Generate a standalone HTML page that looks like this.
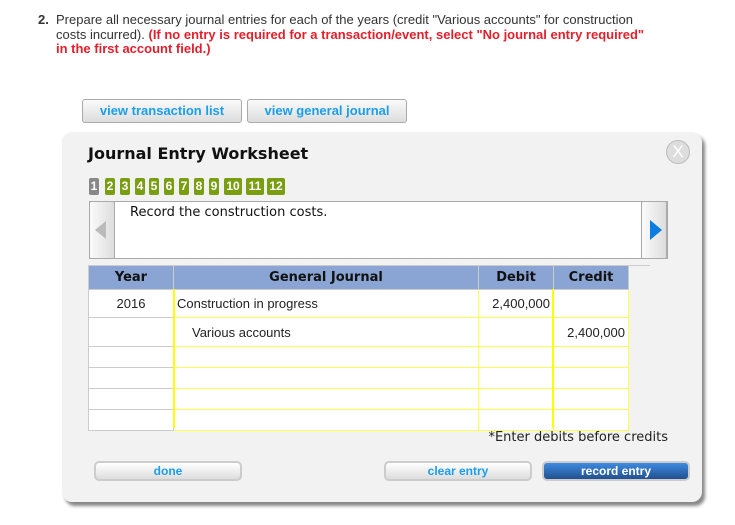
<!DOCTYPE html>
<html><head><meta charset="utf-8"><style>
body{margin:0;width:735px;height:525px;background:#fff;position:relative;overflow:hidden;font-family:"Liberation Sans",Arial,sans-serif}
.a{position:absolute}
.q{left:38px;top:13px;font-size:13px;color:#333;line-height:14.5px;width:610px}
.q b.n{position:absolute;left:0}
.red{color:#e2202c;font-weight:bold}
.tb{top:99px;height:22px;border:1px solid #aaa;border-radius:3px;background:linear-gradient(#fafafa,#ddd);color:#1a9fe8;font-weight:bold;font-size:13px;text-align:center;line-height:22px}
.panel{left:62px;top:132px;width:640px;height:370px;background:#f2f2f2;border-radius:10px;box-shadow:3px 4px 3px #888}
.title{left:88px;top:144px;font:bold 16px "DejaVu Sans",Verdana,sans-serif;color:#111}
.tab{top:178px;height:17px;width:10px;background:#7a9e12;border-radius:2px;color:#fff;font:bold 12px "Liberation Sans",sans-serif;text-align:center;line-height:17px}
.box{left:89px;top:201px;width:577px;height:56px;background:#fff;border:1px solid #aaa}
.nb{top:201px;width:24px;height:56px;border:1px solid #aaa;border-radius:2px;background:linear-gradient(90deg,#fbfbfb,#ddd)}
table{position:absolute;left:88px;top:265px;border-collapse:collapse;font-size:13px;color:#222}
td,th{padding:0;height:20px}
th{background:#8aa5d3;height:23px;font:bold 13px "DejaVu Sans",Verdana,sans-serif;border:1px solid #ccc;color:#111}
td{border:1px solid #ccc;background:#fff}
td.y{border:1px solid #ffff50}
.btn{top:461px;width:144px;height:16px;border:2px solid #ccc;border-radius:5px;background:linear-gradient(#fff,#ddd);color:#1a9fe8;font-weight:bold;font-size:12px;text-align:center;line-height:16px}
</style></head><body>
<div class="a q"><b class="n">2.</b><div style="margin-left:18px">Prepare all necessary journal entries for each of the years (credit "Various accounts" for construction costs incurred). <span class="red">(If no entry is required for a transaction/event, select "No journal entry required" in the first account field.)</span></div></div>
<div class="a tb" style="left:82px;width:158px">view transaction list</div>
<div class="a tb" style="left:247px;width:158px">view general journal</div>
<div class="a panel"></div>
<div class="a title">Journal Entry Worksheet</div>
<div class="a" style="left:666px;top:140px;width:22px;height:22px;border-radius:50%;background:#ddd;border:1px solid #bbb;color:#fff;font-size:17px;text-align:center;line-height:22px">X</div>
<div class="a tab" style="left:89px;background:#888">1</div>
<div class="a tab" style="left:105px">2</div>
<div class="a tab" style="left:120px">3</div>
<div class="a tab" style="left:135px">4</div>
<div class="a tab" style="left:149px">5</div>
<div class="a tab" style="left:164px">6</div>
<div class="a tab" style="left:179px">7</div>
<div class="a tab" style="left:194px">8</div>
<div class="a tab" style="left:209px">9</div>
<div class="a tab" style="left:224px;width:18px">10</div>
<div class="a tab" style="left:246px;width:18px">11</div>
<div class="a tab" style="left:267px;width:18px">12</div>
<div class="a box"></div>
<div class="a" style="left:130px;top:205px;font:13px 'DejaVu Sans',Verdana,sans-serif;color:#111">Record the construction costs.</div>
<div class="a nb" style="left:89px"><div style="position:absolute;left:5px;top:19px;border-right:11px solid #bbb;border-top:9px solid transparent;border-bottom:9px solid transparent"></div></div>
<div class="a nb" style="left:641px"><div style="position:absolute;left:8px;top:18px;border-left:12px solid #0a7de0;border-top:10px solid transparent;border-bottom:10px solid transparent"></div></div>
<div class="a" style="left:88px;top:265px;width:562px;height:1px;background:#ccc"></div>
<table>
<tr><th style="width:84px">Year</th><th style="width:304px">General Journal</th><th style="width:74px">Debit</th><th style="width:74px">Credit</th></tr>
<tr><td style="height:27px;text-align:center">2016</td><td class="y" style="padding-left:3px">Construction in progress</td><td class="y" style="text-align:right;padding-right:3px">2,400,000</td><td class="y"></td></tr>
<tr><td style="height:28px"></td><td class="y" style="padding-left:18px">Various accounts</td><td class="y"></td><td class="y" style="text-align:right;padding-right:3px">2,400,000</td></tr>
<tr><td style="height:18px"></td><td class="y"></td><td class="y"></td><td class="y"></td></tr>
<tr><td style="height:18px"></td><td class="y"></td><td class="y"></td><td class="y"></td></tr>
<tr><td style="height:18px"></td><td class="y"></td><td class="y"></td><td class="y"></td></tr>
<tr><td style="height:17px"></td><td class="y"></td><td class="y"></td><td class="y"></td></tr>
</table>
<div class="a" style="left:173px;top:289px;width:2px;height:139px;background:#ff0"></div>
<div class="a" style="left:552px;top:289px;width:2px;height:139px;background:#ff0"></div>
<div class="a" style="right:67px;top:430px;font:13px 'DejaVu Sans',Verdana,sans-serif;color:#222">*Enter debits before credits</div>
<div class="a btn" style="left:94px">done</div>
<div class="a btn" style="left:384px">clear entry</div>
<div class="a btn" style="left:542px;background:linear-gradient(#3d8be0,#23508f);color:#fff">record entry</div>
</body></html>
